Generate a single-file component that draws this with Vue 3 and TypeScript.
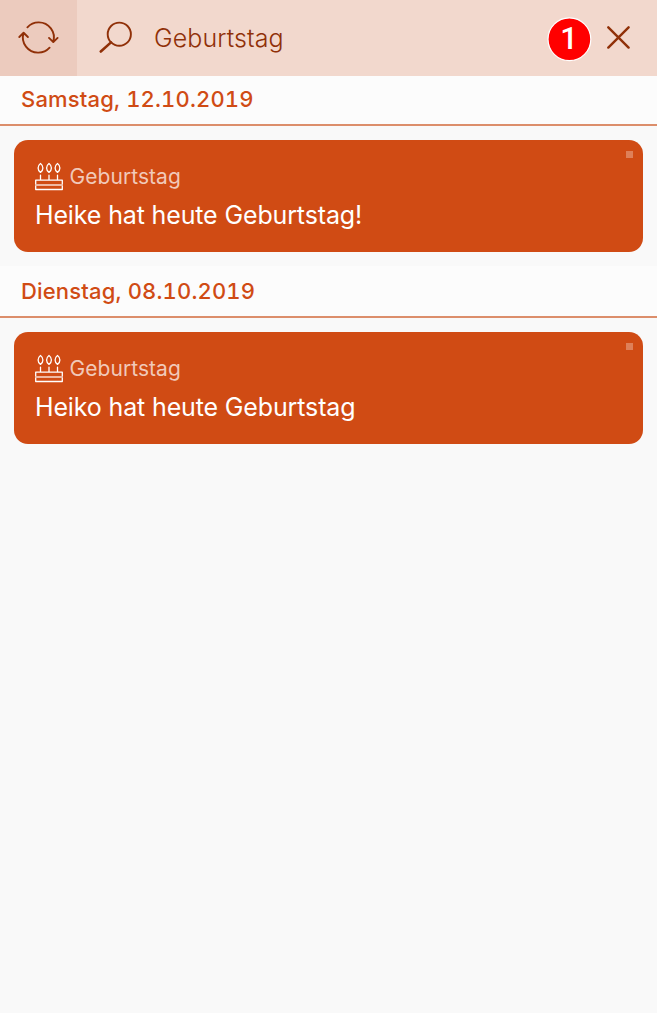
<script setup lang="ts">
import { ref } from 'vue'

interface Entry {
  category: string
  title: string
}

interface Day {
  label: string
  entries: Entry[]
}

const query = ref<string>('Geburtstag')

const days: Day[] = [
  { label: 'Samstag, 12.10.2019', entries: [{ category: 'Geburtstag', title: 'Heike hat heute Geburtstag!' }] },
  { label: 'Dienstag, 08.10.2019', entries: [{ category: 'Geburtstag', title: 'Heiko hat heute Geburtstag' }] },
]
</script>

<template>
  <main class="page">
    <header class="toolbar">
      <button class="refresh" aria-label="Aktualisieren">
        <svg width="42" height="36" viewBox="0 0 42 36">
          <path d="M10.4 7.3A15.1 15.1 0 0 1 21.5 2.4A15.1 15.1 0 0 1 36.2 22M32 17.9l4.3 4.2 4.3-4.2" />
          <path d="M32.6 27.7A15.1 15.1 0 0 1 21.5 32.6A15.1 15.1 0 0 1 6.6 13M2.3 17l4.3-4.2 4.3 4.2" />
        </svg>
      </button>
      <div class="search">
        <svg class="lens" width="34" height="34" viewBox="0 0 34 34">
          <circle cx="20.3" cy="13.2" r="11.6" />
          <path d="M12 21.4L1.8 30.5" stroke-width="2.6" />
        </svg>
        <span class="query">{{ query }}</span>
      </div>
      <span class="marker">
        <svg width="44" height="44" viewBox="0 0 44 44">
          <circle cx="22.4" cy="22.3" r="21.4" />
        </svg>
        <span class="marker-number">1</span>
      </span>
      <button class="clear" aria-label="Löschen" @click="query = ''">
        <svg width="24" height="24" viewBox="0 0 24 24">
          <path d="M2.3 1.3l20.3 20.3M22.6 1.3L2.3 21.6" />
        </svg>
      </button>
    </header>

    <section v-for="day in days" :key="day.label" class="day">
      <h2 class="day-title">{{ day.label }}</h2>
      <article v-for="entry in day.entries" :key="entry.title" class="card">
        <div class="category">
          <svg class="cake" width="28" height="29" viewBox="0 0 28 29">
            <path d="M5.5 1.4C2.3 3.8 2.3 8 5.5 10.4 8.7 8 8.7 3.8 5.5 1.4z" />
            <path d="M14 1.4C10.8 3.8 10.8 8 14 10.4 17.2 8 17.2 3.8 14 1.4z" />
            <path d="M22.5 1.4C19.3 3.8 19.3 8 22.5 10.4 25.7 8 25.7 3.8 22.5 1.4z" />
            <path d="M5.5 13.2v4.5M14 13.2v4.5M22.5 13.2v4.5M.7 18.2h26.6v9.3H.7z" />
            <path class="filling" d="M1 23h26" />
          </svg>
          <span>{{ entry.category }}</span>
        </div>
        <p class="title">{{ entry.title }}</p>
        <i class="status"></i>
      </article>
    </section>
  </main>
</template>

<style>
body {
  margin: 0;
  background: #f9f9f9;
}
</style>

<style scoped>
.page {
  min-height: 1013px;
  background: #f9f9f9;
  font-family: Inter, "Liberation Sans", sans-serif;
}

.toolbar {
  display: flex;
  align-items: center;
  height: 76px;
  background: #f2d8cd;
}

button {
  display: flex;
  align-items: center;
  justify-content: center;
  padding: 0;
  border: 0;
  background: none;
}

svg {
  display: block;
  fill: none;
  stroke: #903008;
  stroke-width: 1.9;
  stroke-linecap: round;
  stroke-linejoin: round;
}

.refresh {
  box-sizing: border-box;
  width: 77px;
  height: 76px;
  padding: 0 1px 0 0;
  background: #eccbbe;
}

.search {
  display: flex;
  flex: 1;
  align-items: center;
  padding-left: 22px;
}

.query {
  margin-left: 21px;
  color: #903008;
  font-size: 25px;
  font-weight: 300;
  line-height: 36px;
  letter-spacing: 0.1px;
}

.marker {
  display: grid;
  place-items: center;
  width: 44px;
  height: 44px;
  margin-top: 2px;
}

.marker > * {
  grid-area: 1 / 1;
}

.marker svg {
  overflow: visible;
  fill: #f00;
  stroke: #fff;
  stroke-width: 1.2;
}

.marker-number {
  color: #fff;
  font-family: Roboto, sans-serif;
  font-size: 31px;
  font-weight: 500;
  line-height: 44px;
}

.clear {
  width: 24px;
  height: 24px;
  margin: 0 27px 0 15px;
}

.clear svg {
  stroke-width: 2.4;
}

.day {
  padding-bottom: 14px;
}

.day-title {
  height: 50px;
  margin: 0 0 14px;
  padding-left: 21px;
  border-bottom: 2px solid #dc8e6b;
  background: #fcfcfc;
  color: #d04b14;
  font-size: 22px;
  font-weight: 500;
  font-variant-numeric: tabular-nums;
  line-height: 50px;
  letter-spacing: 0.17px;
}

.day:first-of-type .day-title {
  height: 48px;
  line-height: 46px;
}

.card {
  position: relative;
  box-sizing: border-box;
  height: 112px;
  margin: 0 14px;
  padding: 22px 21px 0;
  border-radius: 14px;
  background: #d04b14;
}

.category {
  display: flex;
  gap: 6.5px;
  height: 29px;
  color: #f1c9b9;
  font-size: 21px;
  font-weight: 400;
  line-height: 29px;
  letter-spacing: 0.05px;
}

.cake {
  stroke: #fff;
  stroke-width: 1.3;
}

.cake .filling {
  stroke: #efb9a3;
  stroke-width: 2;
}

.title {
  margin: 7px 0 0;
  color: #fff;
  font-size: 25px;
  font-weight: 400;
  line-height: 35px;
  letter-spacing: -0.14px;
}

.status {
  position: absolute;
  top: 11px;
  right: 10px;
  width: 7px;
  height: 7px;
  background: #de8059;
}
</style>
